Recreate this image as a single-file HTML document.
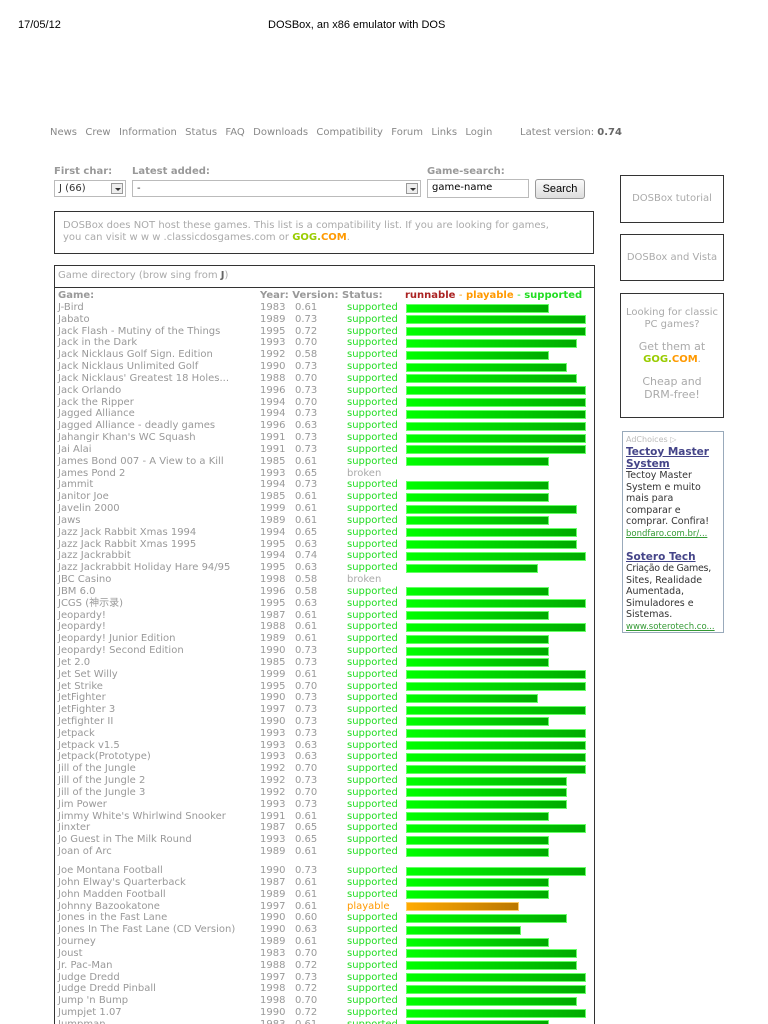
<!DOCTYPE html>
<html><head><meta charset="utf-8"><style>
*{margin:0;padding:0;box-sizing:border-box}
html{width:768px;height:1024px;overflow:hidden}
body{width:768px;height:1024px;overflow:hidden;background:#fff;position:relative;font-family:"DejaVu Sans","Liberation Sans","Noto Sans CJK SC",sans-serif;color:#999;font-size:10px}
.a{position:absolute;white-space:nowrap}
.hd{font-family:"Liberation Sans",sans-serif;color:#000;font-size:11px}
.lbl{font-weight:bold;color:#999;font-size:10px}
.sel{position:absolute;border:1px solid #bbb;background:#fff;height:17px;font-size:10px;color:#333;padding:2px 4px}
.arr{position:absolute;right:2px;top:2px;width:12px;height:11px;border:1px solid #999;background:#eee}
.arr:after{content:"";position:absolute;left:3px;top:4px;border-left:3px solid transparent;border-right:3px solid transparent;border-top:3px solid #333}
.box{position:absolute;border:1px solid #333;background:#fff}
.side{text-align:center;color:#aaa;font-size:10px}
.gog{font-weight:bold;color:#9c0;}
.gog b{color:#f90}
#tbl{position:absolute;left:54px;top:265px;width:541px;height:759px;border:1px solid #333;border-bottom:none}
.r{position:relative;height:11.83px;line-height:11.83px}
.r span{position:absolute;top:0}
.n{left:3px}.y{left:205px}.v{left:240px}.s{left:292px;color:#2d2}
.b{position:absolute;left:351px;top:1.5px;height:9px;background:linear-gradient(90deg,#0f0,#0a0);border:1px solid #6f6}
.o{background:linear-gradient(90deg,#fa0,#b70);border-color:#fc6}
.pl{color:#f90!important}
.br{color:#aaa!important}
</style></head><body>
<div class="a hd" style="left:18px;top:19px">17/05/12</div>
<div class="a hd" style="left:268px;top:19px">DOSBox, an x86 emulator with DOS</div>
<div class="a" style="left:50px;top:127px;color:#888;word-spacing:1px">News&nbsp; Crew&nbsp; Information&nbsp; Status&nbsp; FAQ&nbsp; Downloads&nbsp; Compatibility&nbsp; Forum&nbsp; Links&nbsp; Login</div>
<div class="a" style="left:520px;top:127px;color:#888">Latest version: <b style="color:#666">0.74</b></div>

<div class="a lbl" style="left:54px;top:166px">First char:</div>
<div class="a lbl" style="left:132px;top:166px">Latest added:</div>
<div class="a lbl" style="left:427px;top:166px">Game-search:</div>
<div class="sel" style="left:54px;top:180px;width:72px">J (66)<div class="arr"></div></div>
<div class="sel" style="left:132px;top:180px;width:289px">-<div class="arr"></div></div>
<div class="sel" style="left:427px;top:179px;width:102px;height:19px;color:#000">game-name</div>
<div class="a" style="left:535px;top:179px;width:50px;height:20px;border:1px solid #999;border-radius:3px;background:linear-gradient(#fafafa,#ddd);color:#000;font-family:'Liberation Sans',sans-serif;font-size:11px;text-align:center;line-height:18px">Search</div>

<div class="box" style="left:54px;top:211px;width:540px;height:43px;padding:8px 8px;color:#aaa;line-height:12px">DOSBox does NOT host these games. This list is a compatibility list. If you are looking for games,<br>you can visit w w w .classicdosgames.com or <span class="gog">GOG.<b>COM</b></span>.</div>

<div class="box side" style="left:620px;top:175px;width:104px;height:48px;line-height:46px">DOSBox tutorial</div>
<div class="box side" style="left:620px;top:234px;width:104px;height:47px;line-height:45px">DOSBox and Vista</div>
<div class="box side" style="left:620px;top:293px;width:104px;height:125px;padding-top:13px;line-height:12px">Looking for classic<br>PC games?<br><div style="height:10px"></div><span style="font-size:11px">Get them at</span><br><span class="gog">GOG.<b>COM</b></span>.<br><div style="height:10px"></div><span style="font-size:11px">Cheap and<br>DRM-free!</span></div>
<div class="a" style="left:622px;top:431px;width:102px;height:202px;border:1px solid #9ab;padding:2px 3px;white-space:normal;color:#333;font-size:9.5px;line-height:11.5px;overflow:hidden">
<div style="color:#bbb;font-size:8px;height:13px">AdChoices ▷</div>
<div style="color:#448;font-weight:bold;text-decoration:underline;font-size:10.5px">Tectoy Master System</div>
Tectoy Master System e muito mais para comparar e comprar. Confira!<br><span style="color:#393;text-decoration:underline;font-size:8.5px">bondfaro.com.br/...</span><br><br>
<div style="color:#448;font-weight:bold;text-decoration:underline;font-size:10.5px">Sotero Tech</div>
<span style="letter-spacing:-0.3px">Criação de Games,</span> Sites, Realidade Aumentada, Simuladores e Sistemas.<br><span style="color:#393;text-decoration:underline;font-size:8.5px">www.soterotech.co...</span></div>

<div id="tbl">
<div style="height:22px;line-height:20px;padding-left:3px;border-bottom:1px solid #333;color:#aaa">Game directory (brow sing from <b style="color:#666">J</b>)</div>
<div class="r" style="font-weight:bold;margin-top:2px"><span class="n">Game:</span><span class="y" style="left:205px">Year: Version: Status:</span><span style="left:350px;color:#a22">runnable <span style="position:static;color:#f90;font-weight:normal">-</span> <span style="position:static;color:#f90">playable</span> <span style="position:static;color:#2d2;font-weight:normal">-</span> <span style="position:static;color:#2d2">supported</span></span></div>
</div>
<div style="position:absolute;left:55px;top:302px;width:539px">
<div class="r"><span class="n">J-Bird</span><span class="y">1983</span><span class="v">0.61</span><span class="s">supported</span><i class="b" style="width:143px"></i></div>
<div class="r"><span class="n">Jabato</span><span class="y">1989</span><span class="v">0.73</span><span class="s">supported</span><i class="b" style="width:180px"></i></div>
<div class="r"><span class="n">Jack Flash - Mutiny of the Things</span><span class="y">1995</span><span class="v">0.72</span><span class="s">supported</span><i class="b" style="width:180px"></i></div>
<div class="r"><span class="n">Jack in the Dark</span><span class="y">1993</span><span class="v">0.70</span><span class="s">supported</span><i class="b" style="width:171px"></i></div>
<div class="r"><span class="n">Jack Nicklaus Golf Sign. Edition</span><span class="y">1992</span><span class="v">0.58</span><span class="s">supported</span><i class="b" style="width:143px"></i></div>
<div class="r"><span class="n">Jack Nicklaus Unlimited Golf</span><span class="y">1990</span><span class="v">0.73</span><span class="s">supported</span><i class="b" style="width:161px"></i></div>
<div class="r"><span class="n">Jack Nicklaus' Greatest 18 Holes...</span><span class="y">1988</span><span class="v">0.70</span><span class="s">supported</span><i class="b" style="width:171px"></i></div>
<div class="r"><span class="n">Jack Orlando</span><span class="y">1996</span><span class="v">0.73</span><span class="s">supported</span><i class="b" style="width:180px"></i></div>
<div class="r"><span class="n">Jack the Ripper</span><span class="y">1994</span><span class="v">0.70</span><span class="s">supported</span><i class="b" style="width:180px"></i></div>
<div class="r"><span class="n">Jagged Alliance</span><span class="y">1994</span><span class="v">0.73</span><span class="s">supported</span><i class="b" style="width:180px"></i></div>
<div class="r"><span class="n">Jagged Alliance - deadly games</span><span class="y">1996</span><span class="v">0.63</span><span class="s">supported</span><i class="b" style="width:180px"></i></div>
<div class="r"><span class="n">Jahangir Khan's WC Squash</span><span class="y">1991</span><span class="v">0.73</span><span class="s">supported</span><i class="b" style="width:180px"></i></div>
<div class="r"><span class="n">Jai Alai</span><span class="y">1991</span><span class="v">0.73</span><span class="s">supported</span><i class="b" style="width:180px"></i></div>
<div class="r"><span class="n">James Bond 007 - A View to a Kill</span><span class="y">1985</span><span class="v">0.61</span><span class="s">supported</span><i class="b" style="width:143px"></i></div>
<div class="r"><span class="n">James Pond 2</span><span class="y">1993</span><span class="v">0.65</span><span class="s br">broken</span></div>
<div class="r"><span class="n">Jammit</span><span class="y">1994</span><span class="v">0.73</span><span class="s">supported</span><i class="b" style="width:143px"></i></div>
<div class="r"><span class="n">Janitor Joe</span><span class="y">1985</span><span class="v">0.61</span><span class="s">supported</span><i class="b" style="width:143px"></i></div>
<div class="r"><span class="n">Javelin 2000</span><span class="y">1999</span><span class="v">0.61</span><span class="s">supported</span><i class="b" style="width:171px"></i></div>
<div class="r"><span class="n">Jaws</span><span class="y">1989</span><span class="v">0.61</span><span class="s">supported</span><i class="b" style="width:143px"></i></div>
<div class="r"><span class="n">Jazz Jack Rabbit Xmas 1994</span><span class="y">1994</span><span class="v">0.65</span><span class="s">supported</span><i class="b" style="width:171px"></i></div>
<div class="r"><span class="n">Jazz Jack Rabbit Xmas 1995</span><span class="y">1995</span><span class="v">0.63</span><span class="s">supported</span><i class="b" style="width:171px"></i></div>
<div class="r"><span class="n">Jazz Jackrabbit</span><span class="y">1994</span><span class="v">0.74</span><span class="s">supported</span><i class="b" style="width:180px"></i></div>
<div class="r"><span class="n">Jazz Jackrabbit Holiday Hare 94/95</span><span class="y">1995</span><span class="v">0.63</span><span class="s">supported</span><i class="b" style="width:132px"></i></div>
<div class="r"><span class="n">JBC Casino</span><span class="y">1998</span><span class="v">0.58</span><span class="s br">broken</span></div>
<div class="r"><span class="n">JBM 6.0</span><span class="y">1996</span><span class="v">0.58</span><span class="s">supported</span><i class="b" style="width:143px"></i></div>
<div class="r"><span class="n">JCGS (神示录)</span><span class="y">1995</span><span class="v">0.63</span><span class="s">supported</span><i class="b" style="width:180px"></i></div>
<div class="r"><span class="n">Jeopardy!</span><span class="y">1987</span><span class="v">0.61</span><span class="s">supported</span><i class="b" style="width:143px"></i></div>
<div class="r"><span class="n">Jeopardy!</span><span class="y">1988</span><span class="v">0.61</span><span class="s">supported</span><i class="b" style="width:180px"></i></div>
<div class="r"><span class="n">Jeopardy! Junior Edition</span><span class="y">1989</span><span class="v">0.61</span><span class="s">supported</span><i class="b" style="width:143px"></i></div>
<div class="r"><span class="n">Jeopardy! Second Edition</span><span class="y">1990</span><span class="v">0.73</span><span class="s">supported</span><i class="b" style="width:143px"></i></div>
<div class="r"><span class="n">Jet 2.0</span><span class="y">1985</span><span class="v">0.73</span><span class="s">supported</span><i class="b" style="width:143px"></i></div>
<div class="r"><span class="n">Jet Set Willy</span><span class="y">1999</span><span class="v">0.61</span><span class="s">supported</span><i class="b" style="width:180px"></i></div>
<div class="r"><span class="n">Jet Strike</span><span class="y">1995</span><span class="v">0.70</span><span class="s">supported</span><i class="b" style="width:180px"></i></div>
<div class="r"><span class="n">JetFighter</span><span class="y">1990</span><span class="v">0.73</span><span class="s">supported</span><i class="b" style="width:132px"></i></div>
<div class="r"><span class="n">JetFighter 3</span><span class="y">1997</span><span class="v">0.73</span><span class="s">supported</span><i class="b" style="width:180px"></i></div>
<div class="r"><span class="n">Jetfighter II</span><span class="y">1990</span><span class="v">0.73</span><span class="s">supported</span><i class="b" style="width:143px"></i></div>
<div class="r"><span class="n">Jetpack</span><span class="y">1993</span><span class="v">0.73</span><span class="s">supported</span><i class="b" style="width:180px"></i></div>
<div class="r"><span class="n">Jetpack v1.5</span><span class="y">1993</span><span class="v">0.63</span><span class="s">supported</span><i class="b" style="width:180px"></i></div>
<div class="r"><span class="n">Jetpack(Prototype)</span><span class="y">1993</span><span class="v">0.63</span><span class="s">supported</span><i class="b" style="width:180px"></i></div>
<div class="r"><span class="n">Jill of the Jungle</span><span class="y">1992</span><span class="v">0.70</span><span class="s">supported</span><i class="b" style="width:180px"></i></div>
<div class="r"><span class="n">Jill of the Jungle 2</span><span class="y">1992</span><span class="v">0.73</span><span class="s">supported</span><i class="b" style="width:161px"></i></div>
<div class="r"><span class="n">Jill of the Jungle 3</span><span class="y">1992</span><span class="v">0.70</span><span class="s">supported</span><i class="b" style="width:161px"></i></div>
<div class="r"><span class="n">Jim Power</span><span class="y">1993</span><span class="v">0.73</span><span class="s">supported</span><i class="b" style="width:161px"></i></div>
<div class="r"><span class="n">Jimmy White's Whirlwind Snooker</span><span class="y">1991</span><span class="v">0.61</span><span class="s">supported</span><i class="b" style="width:143px"></i></div>
<div class="r"><span class="n">Jinxter</span><span class="y">1987</span><span class="v">0.65</span><span class="s">supported</span><i class="b" style="width:180px"></i></div>
<div class="r"><span class="n">Jo Guest in The Milk Round</span><span class="y">1993</span><span class="v">0.65</span><span class="s">supported</span><i class="b" style="width:143px"></i></div>
<div class="r"><span class="n">Joan of Arc</span><span class="y">1989</span><span class="v">0.61</span><span class="s">supported</span><i class="b" style="width:143px"></i></div>
<div style="height:7.2px"></div>
<div class="r"><span class="n">Joe Montana Football</span><span class="y">1990</span><span class="v">0.73</span><span class="s">supported</span><i class="b" style="width:180px"></i></div>
<div class="r"><span class="n">John Elway's Quarterback</span><span class="y">1987</span><span class="v">0.61</span><span class="s">supported</span><i class="b" style="width:143px"></i></div>
<div class="r"><span class="n">John Madden Football</span><span class="y">1989</span><span class="v">0.61</span><span class="s">supported</span><i class="b" style="width:143px"></i></div>
<div class="r"><span class="n">Johnny Bazookatone</span><span class="y">1997</span><span class="v">0.61</span><span class="s pl">playable</span><i class="b o" style="width:113px"></i></div>
<div class="r"><span class="n">Jones in the Fast Lane</span><span class="y">1990</span><span class="v">0.60</span><span class="s">supported</span><i class="b" style="width:161px"></i></div>
<div class="r"><span class="n">Jones In The Fast Lane (CD Version)</span><span class="y">1990</span><span class="v">0.63</span><span class="s">supported</span><i class="b" style="width:115px"></i></div>
<div class="r"><span class="n">Journey</span><span class="y">1989</span><span class="v">0.61</span><span class="s">supported</span><i class="b" style="width:143px"></i></div>
<div class="r"><span class="n">Joust</span><span class="y">1983</span><span class="v">0.70</span><span class="s">supported</span><i class="b" style="width:171px"></i></div>
<div class="r"><span class="n">Jr. Pac-Man</span><span class="y">1988</span><span class="v">0.72</span><span class="s">supported</span><i class="b" style="width:171px"></i></div>
<div class="r"><span class="n">Judge Dredd</span><span class="y">1997</span><span class="v">0.73</span><span class="s">supported</span><i class="b" style="width:180px"></i></div>
<div class="r"><span class="n">Judge Dredd Pinball</span><span class="y">1998</span><span class="v">0.72</span><span class="s">supported</span><i class="b" style="width:180px"></i></div>
<div class="r"><span class="n">Jump 'n Bump</span><span class="y">1998</span><span class="v">0.70</span><span class="s">supported</span><i class="b" style="width:171px"></i></div>
<div class="r"><span class="n">Jumpjet 1.07</span><span class="y">1990</span><span class="v">0.72</span><span class="s">supported</span><i class="b" style="width:180px"></i></div>
<div class="r"><span class="n">Jumpman</span><span class="y">1983</span><span class="v">0.61</span><span class="s">supported</span><i class="b" style="width:143px"></i></div>
</div>
</body></html>
